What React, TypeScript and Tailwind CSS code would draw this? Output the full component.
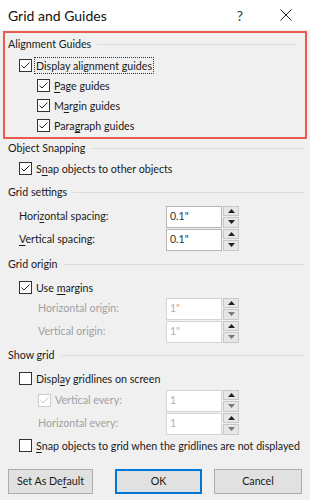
import React from 'react';

const FONT = { fontFamily: 'Lato, "Liberation Sans", sans-serif' };

// mnemonic underline helper
const U = ({ children }: { children: React.ReactNode }) => <span className="underline underline-offset-2">{children}</span>;

const SectionHeader = ({ title, h }: { title: string; h: string }) => (
  <div className={`flex items-center gap-[6px] pr-[6px] ${h}`}>
    <span className="whitespace-nowrap">{title}</span>
    <div className="h-px flex-1 bg-[#dcdcdc]" />
  </div>
);

const Check = ({ checked, disabled }: { checked: boolean; disabled?: boolean }) => (
  <div
    className={`flex h-[13px] w-[13px] shrink-0 items-center justify-center border bg-white ${
      disabled ? 'border-[#cccccc]' : 'border-[#333333]'
    }`}
  >
    {checked && (
      <svg width="11" height="11" viewBox="0 0 11 11">
        <path d="M1.5 5.5 L4 8 L9.5 2.5" fill="none" stroke={disabled ? '#c4c4c4' : '#222'} strokeWidth="1" />
      </svg>
    )}
  </div>
);

const CheckRow = ({
  label,
  checked,
  indent,
  h,
  disabled,
  focus,
}: {
  label: React.ReactNode;
  checked: boolean;
  indent: string;
  h: string;
  disabled?: boolean;
  focus?: boolean;
}) => (
  <div className={`flex items-center ${indent} ${h}`}>
    <Check checked={checked} disabled={disabled} />
    <span
      className={`ml-[2px] whitespace-nowrap px-[1px] leading-[15px] ${
        focus ? 'border border-dotted border-[#333]' : 'border border-transparent'
      } ${disabled ? 'text-[#a0a0a0]' : ''}`}
    >
      {label}
    </span>
  </div>
);

const Spinner = ({ value, disabled }: { value: string; disabled?: boolean }) => (
  <div className="flex h-[22px]">
    <div
      className={`flex w-[56px] items-center border bg-white px-[3px] text-[10.5px] ${
        disabled ? 'border-[#d4d4d4] text-[#b0b0b0]' : 'border-[#b5b5b5] text-[#333]'
      }`}
    >
      {value}
    </div>
    <div className="flex w-[17px] flex-col gap-px pl-px">
      <div className="flex flex-1 items-center justify-center border border-[#c8c8c8] bg-[#e6e6e6]">
        <svg width="7" height="4" viewBox="0 0 7 4">
          <path d="M0 4 L3.5 0 L7 4 Z" fill="#222" />
        </svg>
      </div>
      <div className="flex flex-1 items-center justify-center border border-[#c8c8c8] bg-[#e6e6e6]">
        <svg width="7" height="4" viewBox="0 0 7 4">
          <path d="M0 0 L3.5 4 L7 0 Z" fill={disabled ? '#777' : '#222'} />
        </svg>
      </div>
    </div>
  </div>
);

const SpinRow = ({
  label,
  value,
  indent,
  disabled,
  labelNode,
}: {
  label?: React.ReactNode;
  value: string;
  indent: string;
  disabled?: boolean;
  labelNode?: React.ReactNode;
}) => (
  <div className="flex h-[23px] items-center">
    <div className={`flex w-[158px] items-center ${indent}`}>
      {labelNode ?? <span className={disabled ? 'text-[#a0a0a0]' : ''}>{label}</span>}
    </div>
    <Spinner value={value} disabled={disabled} />
  </div>
);

const Button = ({ children, primary, w }: { children: React.ReactNode; primary?: boolean; w: string }) => (
  <div
    className={`flex h-[25px] items-center justify-center bg-[#e1e1e1] ${w} ${
      primary ? 'border-2 border-[#0078d7]' : 'border border-[#adadad]'
    }`}
  >
    {children}
  </div>
);

export default function App() {
  return (
    <div style={FONT} className="flex h-[500px] w-[310px] flex-col bg-[#f0f0f0] text-[10.7px] text-[#1a1a1a]">
      {/* Title bar */}
      <div className="flex h-[30px] shrink-0 items-center bg-white pl-2">
        <span className="text-[14px] text-[#111]">Grid and Guides</span>
        <span className="ml-auto mr-[37px] text-[14px] text-[#333]">?</span>
        <svg className="mr-[18px]" width="12" height="12" viewBox="0 0 12 12">
          <path d="M0.5 0.5 L11.5 11.5 M11.5 0.5 L0.5 11.5" stroke="#222" strokeWidth="1" />
        </svg>
      </div>

      {/* Alignment guides (highlighted) */}
      <div className="mx-[3px] mt-px h-[108px] border-2 border-[#ea5a50] px-[3px]">
        <SectionHeader title="Alignment Guides" h="h-[22px]" />
        <CheckRow label="Display alignment guides" checked indent="pl-[11px]" h="h-[20px]" focus />
        <CheckRow label={<><U>P</U>age guides</>} checked indent="pl-[29px]" h="h-[20px]" />
        <CheckRow label={<>M<U>a</U>rgin guides</>} checked indent="pl-[29px]" h="h-[20px]" />
        <CheckRow label={<>Para<U>g</U>raph guides</>} checked indent="pl-[29px]" h="h-[20px]" />
      </div>

      <div className="flex flex-col pl-2">
        <SectionHeader title="Object Snapping" h="h-[18px]" />
        <CheckRow label={<>S<U>n</U>ap objects to other objects</>} checked indent="pl-[11px]" h="h-[22px]" />

        <SectionHeader title="Grid settings" h="h-[26px]" />
        <SpinRow label={<>Hori<U>z</U>ontal spacing:</>} value={'0.1"'} indent="pl-[11px]" />
        <SpinRow label={<><U>V</U>ertical spacing:</>} value={'0.1"'} indent="pl-[11px]" />

        <SectionHeader title="Grid origin" h="h-[26px]" />
        <CheckRow label={<>Use <U>m</U>argins</>} checked indent="pl-[11px]" h="h-[20px]" />
        <SpinRow label="Horizontal origin:" value={'1"'} indent="pl-[30px]" disabled />
        <SpinRow label="Vertical origin:" value={'1"'} indent="pl-[30px]" disabled />

        <SectionHeader title="Show grid" h="h-[24px]" />
        <CheckRow label={<>Displ<U>a</U>y gridlines on screen</>} checked={false} indent="pl-[11px]" h="h-[22px]" />
        <SpinRow
          value="1"
          indent="pl-[30px]"
          disabled
          labelNode={
            <div className="flex items-center">
              <Check checked disabled />
              <span className="ml-[4px] text-[#a0a0a0]">Vertical every:</span>
            </div>
          }
        />
        <SpinRow label="Horizontal every:" value="1" indent="pl-[30px]" disabled />
        <CheckRow
          label={<><U>S</U>nap objects to grid when the gridlines are not displayed</>}
          checked={false}
          indent="pl-[11px]"
          h="h-[20px]"
        />
      </div>

      {/* Buttons */}
      <div className="mt-[14px] flex items-center px-2">
        <Button w="w-[85px]">Set As De<U>f</U>ault</Button>
        <div className="ml-[22px]">
          <Button w="w-[87px]" primary>OK</Button>
        </div>
        <div className="ml-[12px]">
          <Button w="w-[88px]">Cancel</Button>
        </div>
      </div>
    </div>
  );
}
